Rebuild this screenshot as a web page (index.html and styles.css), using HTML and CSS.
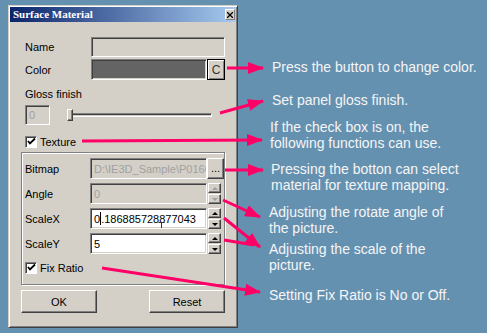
FILE: index.html
```html
<!DOCTYPE html>
<html>
<head>
<meta charset="utf-8">
<link rel="stylesheet" href="styles.css">
</head>
<body>
<div class="page">
  <div class="dialog">
    <div class="titlebar">
      <span class="title">Surface Material</span>
      <span class="close"><svg width="6" height="6" viewBox="0 0 6 6"><path d="M0 0L6 6M6 0L0 6" stroke="#000" stroke-width="1.3"/></svg></span>
    </div>
    <div class="client">
      <div class="row r-name"><span class="lbl">Name</span><div class="edit disabled name-edit"></div></div>
      <div class="row r-color"><span class="lbl">Color</span><div class="edit swatch"></div><div class="btn cbtn">C</div></div>
      <div class="gloss-label">Gloss finish</div>
      <div class="gloss-row">
        <div class="edit disabled gloss-edit">0</div>
        <div class="slider"><div class="track"></div><div class="thumb"></div></div>
      </div>
      <div class="check r-texture"><span class="box"><svg width="9" height="9" viewBox="0 0 9 9"><path d="M1 4L3 6.5L8 1.5" fill="none" stroke="#000" stroke-width="1.8"/></svg></span><span>Texture</span></div>
      <div class="group">
        <div class="grow"><span class="glbl">Bitmap</span><div class="edit disabled gedit">D:\IE3D_Sample\P0160</div><div class="btn dots">...</div></div>
        <div class="grow"><span class="glbl">Angle</span><div class="edit disabled gedit">0</div>
          <div class="spin off"><div class="sb"><i class="up"></i></div><div class="sb"><i class="down"></i></div></div></div>
        <div class="grow"><span class="glbl">ScaleX</span><div class="edit gedit">0<span class="caret"></span>.186885728877043<svg class="ibeam" width="7" height="11" viewBox="0 0 7 11"><path d="M0.5 0.5H6.5M3.5 0.5V10.5M0.5 10.5H6.5" fill="none" stroke="#333" stroke-width="1"/></svg></div>
          <div class="spin"><div class="sb"><i class="up"></i></div><div class="sb"><i class="down"></i></div></div></div>
        <div class="grow"><span class="glbl">ScaleY</span><div class="edit gedit">5</div>
          <div class="spin"><div class="sb"><i class="up"></i></div><div class="sb"><i class="down"></i></div></div></div>
        <div class="check r-fix"><span class="box"><svg width="9" height="9" viewBox="0 0 9 9"><path d="M1 4L3 6.5L8 1.5" fill="none" stroke="#000" stroke-width="1.8"/></svg></span><span>Fix Ratio</span></div>
      </div>
      <div class="buttons"><div class="btn pbtn">OK</div><div class="btn pbtn">Reset</div></div>
    </div>
  </div>
  <div class="notes">
    <div class="note n1">Press the button to change color.</div>
    <div class="note n2">Set panel gloss finish.</div>
    <div class="note n3">If the check box is on, the<br>following functions can use.</div>
    <div class="note n4">Pressing the botton can select<br>material for texture mapping.</div>
    <div class="note n5">Adjusting the rotate angle of<br>the picture.</div>
    <div class="note n6">Adjusting the scale of the<br>picture.</div>
    <div class="note n7">Setting Fix Ratio is No or Off.</div>
  </div>
</div>
<svg class="arrows" width="487" height="333" viewBox="0 0 487 333">
  <defs>
    <marker id="ah" markerUnits="userSpaceOnUse" markerWidth="16" markerHeight="12" refX="15" refY="6" orient="auto">
      <path d="M0 0L16 6L0 12z" fill="#ff0066"/>
    </marker>
  </defs>
  <g stroke="#ff0066" stroke-width="3" fill="none">
    <line x1="227" y1="68" x2="263" y2="68" marker-end="url(#ah)"/>
    <line x1="220" y1="113" x2="263" y2="101" marker-end="url(#ah)"/>
    <line x1="82" y1="141" x2="262" y2="140" marker-end="url(#ah)"/>
    <line x1="225" y1="170" x2="263" y2="170" marker-end="url(#ah)"/>
    <line x1="223" y1="200" x2="260" y2="217" marker-end="url(#ah)"/>
    <line x1="224" y1="218" x2="260" y2="247" marker-end="url(#ah)"/>
    <line x1="224" y1="240" x2="254" y2="245"/>
    <line x1="102" y1="268" x2="260" y2="292" marker-end="url(#ah)"/>
  </g>
</svg>
</body>
</html>
```
FILE: styles.css
```css
* { box-sizing: border-box; }
html, body { margin: 0; padding: 0; }
body {
  width: 487px;
  height: 333px;
  overflow: hidden;
  position: relative;
  background: #6591b1;
  font-family: "Liberation Sans", Arial, sans-serif;
}
.page { display: flex; align-items: flex-start; }

.dialog {
  margin: 5px 0 0 8px;
  width: 230px;
  height: 323px;
  background: #d4d0c8;
  border: 1px solid;
  border-color: #d4d0c8 #404040 #404040 #d4d0c8;
  box-shadow: inset 1px 1px #fff, inset -1px -1px #808080;
  padding: 1px;
  display: flex;
  flex-direction: column;
  font-size: 11px;
  color: #000;
}
.titlebar {
  height: 15px;
  flex: none;
  background: linear-gradient(90deg, #0a246a, #a6caf0);
  display: flex;
  align-items: center;
  justify-content: space-between;
  padding: 0 1px 0 3px;
}
.title {
  font-family: "Liberation Serif", serif;
  font-weight: bold;
  font-size: 11px;
  color: #fff;
  line-height: 15px;
}
.close {
  width: 10px;
  height: 11px;
  background: #d4d0c8;
  border: 1px solid;
  border-color: #fff #808080 #808080 #fff;
  display: flex;
  align-items: center;
  justify-content: center;
}
.client { padding: 15px 11px 0 11px; display: flex; flex-direction: column; }

.row { display: flex; align-items: center; }
.lbl { width: 70px; padding-left: 4px; }
.edit {
  border: 1px solid;
  border-color: #808080 #fff #fff #808080;
  box-shadow: inset 1px 1px #404040, inset -1px -1px #d4d0c8;
  background: #fff;
  padding: 0 3px;
  display: flex;
  align-items: center;
  white-space: nowrap;
  overflow: hidden;
  position: relative;
}
.edit.disabled { background: #d4d0c8; color: #a0a0a0; }
.r-name { height: 20px; }
.name-edit { width: 134px; height: 20px; }
.r-color { height: 21px; margin-top: 2px; }
.swatch { width: 116px; height: 21px; background: #646464; }
.btn {
  background: #d4d0c8;
  border: 1px solid;
  border-color: #fff #404040 #404040 #fff;
  box-shadow: inset -1px -1px #808080;
  display: flex;
  align-items: center;
  justify-content: center;
}
.cbtn {
  width: 18px;
  height: 21px;
  border-color: #000;
  box-shadow: inset 1px 1px #fff, inset -1px -1px #808080;
  font-size: 12px;
  color: #333;
}
.gloss-label { margin-top: 8px; padding-left: 4px; line-height: 13px; }
.gloss-row { display: flex; align-items: center; margin-top: 4px; height: 20px; }
.gloss-edit { margin-left: 4px; width: 25px; height: 20px; }
.slider { position: relative; width: 148px; height: 20px; margin-left: 16px; }
.track {
  position: absolute;
  left: 1px; right: 2px; top: 8px;
  height: 4px;
  border: 1px solid;
  border-color: #808080 #fff #fff #808080;
  box-shadow: inset 1px 1px #404040;
}
.thumb {
  position: absolute;
  left: 1px; top: 4px;
  width: 6px; height: 12px;
  background: #d4d0c8;
  border: 1px solid;
  border-color: #fff #404040 #404040 #fff;
  box-shadow: inset -1px -1px #808080;
}

.check { display: flex; align-items: center; height: 13px; gap: 3px; padding-left: 4px; }
.r-texture { margin-top: 10px; }
.box {
  width: 12px; height: 12px;
  background: #fff;
  border: 1px solid;
  border-color: #808080 #fff #fff #808080;
  box-shadow: inset 1px 1px #404040;
  display: flex;
  align-items: center;
  justify-content: center;
}

.group {
  margin-top: 4px;
  border: 1px solid #808080;
  box-shadow: inset 1px 1px #fff, 1px 1px #fff;
  padding: 5px 0 10px 3px;
  display: flex;
  flex-direction: column;
  gap: 4px;
}
.grow { display: flex; align-items: center; height: 21px; }
.glbl { width: 65px; }
.gedit { width: 117px; height: 21px; }
.dots { width: 17px; height: 21px; font-size: 11px; padding-bottom: 2px; }
.spin { margin-left: 1px; width: 13px; height: 21px; display: flex; flex-direction: column; justify-content: space-between; }
.sb {
  height: 10px;
  background: #d4d0c8;
  border: 1px solid;
  border-color: #fff #404040 #404040 #fff;
  box-shadow: inset -1px -1px #808080;
  display: flex;
  align-items: center;
  justify-content: center;
}
.sb i { display: block; width: 0; height: 0; border-left: 3px solid transparent; border-right: 3px solid transparent; }
.sb i.up { border-bottom: 3px solid #000; }
.sb i.down { border-top: 3px solid #000; }
.spin.off .sb i.up { border-bottom-color: #a0a0a0; }
.spin.off .sb i.down { border-top-color: #a0a0a0; }
.caret { display: inline-block; width: 1px; height: 13px; background: #000; }
.ibeam { position: absolute; left: 67px; top: 13px; }
.r-fix { margin-top: 3px; padding-left: 0; }

.buttons { display: flex; justify-content: space-between; margin-top: 5px; }
.pbtn { width: 76px; height: 23px; }

.notes {
  margin-left: 31px;
  display: flex;
  flex-direction: column;
  color: #f5f5f5;
  font-size: 14px;
  line-height: 16px;
  white-space: nowrap;
}
.n1 { margin-top: 59px; margin-left: 3px; }
.n2 { margin-top: 17px; margin-left: 3px; }
.n3 { margin-top: 11px; margin-left: 1px; }
.n4 { margin-top: 10px; margin-left: 2px; }
.n5 { margin-top: 11px; }
.n6 { margin-top: 5px; }
.n7 { margin-top: 14px; }

.arrows { position: absolute; left: 0; top: 0; pointer-events: none; }
```
